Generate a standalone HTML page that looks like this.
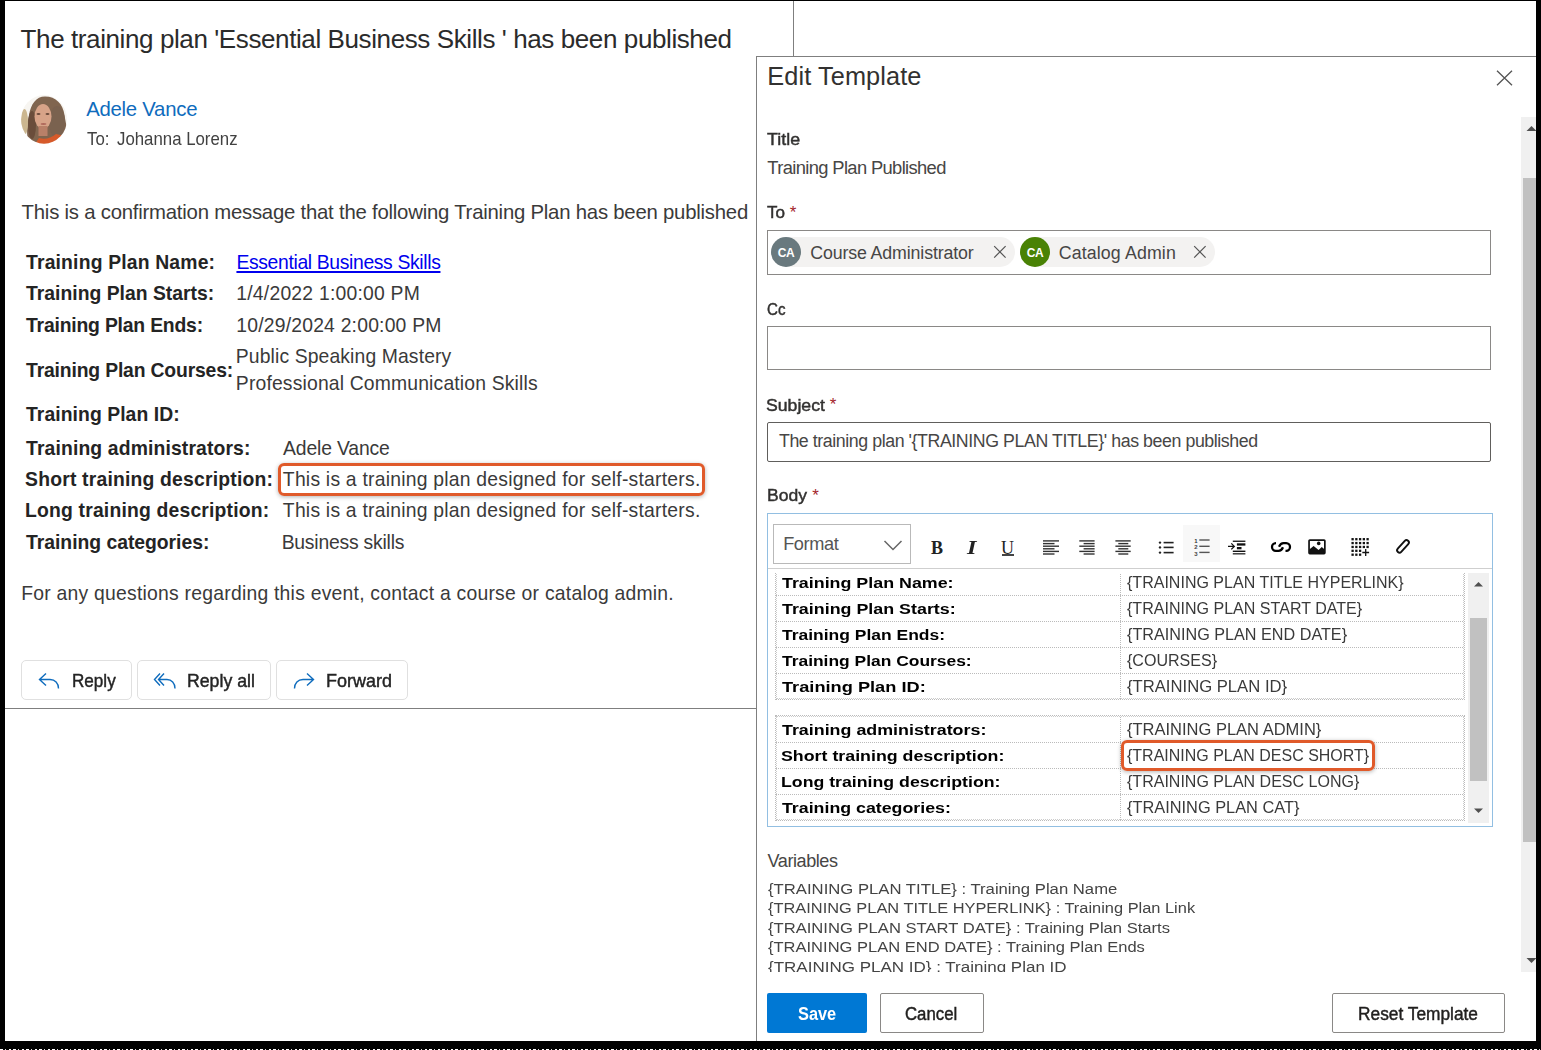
<!DOCTYPE html>
<html><head><meta charset="utf-8">
<style>
html,body{margin:0;padding:0;width:1541px;height:1050px;overflow:hidden;background:#000;}
*{box-sizing:border-box;}
body{font-family:"Liberation Sans",sans-serif;position:relative;}
.t{position:absolute;white-space:pre;line-height:1;}
.fr,.fv,.frs{font-weight:normal;}
.fb,.fvb,.fsb{font-weight:bold;}
.fs{font-weight:normal;-webkit-text-stroke:0.45px currentColor;}
.ast{position:absolute;color:#a4262c;font-size:17px;line-height:1;}
.ca{position:absolute;width:30px;text-align:center;color:#fff;font-size:12px;font-weight:bold;line-height:16px;letter-spacing:-0.4px;}
.tb{position:absolute;font-family:"Liberation Serif",serif;font-size:18px;line-height:1;color:#222;}
#varclip{position:absolute;left:760px;top:875px;width:700px;height:97px;overflow:hidden;}
</style></head>
<body>

<div class="deco" style="position:absolute;left:5px;top:1px;width:1531px;height:1040px;background:#fff;"></div>
<div class="deco" style="position:absolute;left:793px;top:1px;width:1px;height:56px;background:#7f7f7f;"></div>
<!-- avatar -->
<svg class="deco" style="position:absolute;left:21px;top:95px;filter:blur(0.45px);" width="48" height="49" viewBox="0 0 48 49">
<defs><clipPath id="avc"><ellipse cx="23" cy="24.4" rx="23" ry="24.3"/></clipPath><filter id="avb"><feGaussianBlur stdDeviation="0.7"/></filter></defs>
<g clip-path="url(#avc)"><rect x="0" y="0" width="48" height="49" fill="#f7f5f1"/>
<g filter="url(#avb)">
<path d="M24 1.5 C35 1.5 42 9 43.5 20 C45 30 48 38 45 44 L38 49 L8 49 C5 40 6 30 8 20 C10 9 15 1.5 24 1.5 Z" fill="#806550"/>
<ellipse cx="36" cy="27" rx="8" ry="16" fill="#7a6250"/>
<ellipse cx="11" cy="30" rx="4" ry="14" fill="#6a4e3a"/>
<ellipse cx="3.5" cy="27" rx="3.5" ry="13" fill="#cbb68f"/>
<ellipse cx="22" cy="21.5" rx="8.5" ry="12.5" fill="#d7a388"/>
<rect x="17.5" y="31" width="9" height="10" fill="#b98068"/>
<path d="M14 49 L18 43 C24 45 30 43 35 39 L44 41 L46 49 Z" fill="#d65a2a"/>
<ellipse cx="17.5" cy="19" rx="2" ry="1" fill="#6a4a3a"/>
<ellipse cx="26.5" cy="19" rx="2" ry="1" fill="#6a4a3a"/>
<ellipse cx="22.5" cy="29" rx="3" ry="1.1" fill="#b06a5c"/>
</g></g></svg>
<!-- email highlight -->
<div class="deco" style="position:absolute;left:278px;top:463px;width:427px;height:32.5px;border:3px solid #e05a2a;border-radius:6px;box-shadow:0 1px 4px rgba(0,0,0,.3);"></div>
<!-- buttons -->
<div class="deco" style="position:absolute;left:21px;top:660px;width:111px;height:40px;border:1px solid #e0e0e0;border-radius:5px;"></div>
<div class="deco" style="position:absolute;left:137px;top:660px;width:134px;height:40px;border:1px solid #e0e0e0;border-radius:5px;"></div>
<div class="deco" style="position:absolute;left:276px;top:660px;width:132px;height:40px;border:1px solid #e0e0e0;border-radius:5px;"></div>
<svg class="deco" style="position:absolute;left:36px;top:670px;" width="26" height="22" viewBox="0 0 26 22"><path d="M10 3.5 L3.5 9.5 L10 15.5 M3.5 9.5 H14 C19 9.5 22.5 13 22.5 18.5" fill="none" stroke="#0f6cbd" stroke-width="1.4"/></svg>
<svg class="deco" style="position:absolute;left:152px;top:670px;" width="26" height="22" viewBox="0 0 26 22"><path d="M8 3.5 L2.5 9.5 L8 15.5 M12 3.5 L6.5 9.5 L12 15.5 M6.5 9.5 H15 C19.5 9.5 23 13 23 18.5" fill="none" stroke="#0f6cbd" stroke-width="1.4"/></svg>
<svg class="deco" style="position:absolute;left:291px;top:670px;" width="26" height="22" viewBox="0 0 26 22"><path d="M16 3.5 L22.5 9.5 L16 15.5 M22.5 9.5 H12 C7 9.5 3.5 13 3.5 18.5" fill="none" stroke="#0f6cbd" stroke-width="1.4"/></svg>
<div class="deco" style="position:absolute;left:5px;top:708px;width:751px;height:1px;background:#7f7f7f;"></div>

<!-- dialog -->
<div class="deco" style="position:absolute;left:756px;top:56px;width:780px;height:985px;background:#fff;border-left:1px solid #7f7f7f;border-top:1px solid #7f7f7f;"></div>
<svg class="deco" style="position:absolute;left:1494px;top:68px;" width="21" height="21" viewBox="0 0 21 21"><path d="M3 2.8 L18 17.3 M18 2.8 L3 17.3" stroke="#555" stroke-width="1.3" fill="none"/></svg>
<!-- dialog scrollbar -->
<div class="deco" style="position:absolute;left:1521px;top:117px;width:15px;height:855px;background:#f0f0f0;"></div>
<div class="deco" style="position:absolute;left:1523px;top:178px;width:13px;height:664px;background:#c1c1c1;"></div>
<svg class="deco" style="position:absolute;left:1524px;top:124px;" width="14" height="8" viewBox="0 0 14 8"><path d="M2.5 7 L7.5 2 L12.5 7 Z" fill="#505050"/></svg>
<svg class="deco" style="position:absolute;left:1524px;top:957px;" width="14" height="8" viewBox="0 0 14 8"><path d="M2.5 1 L7.5 6 L12.5 1 Z" fill="#505050"/></svg>

<!-- asterisks -->
<div class="deco ast" style="left:789.8px;top:204px;">*</div>
<div class="deco ast" style="left:829.8px;top:396px;">*</div>
<div class="deco ast" style="left:812.3px;top:486.5px;">*</div>

<!-- To input -->
<div class="deco" style="position:absolute;left:767px;top:230px;width:724px;height:45px;border:1px solid #8a8886;"></div>
<div class="deco" style="position:absolute;left:771px;top:237px;width:244px;height:30px;border-radius:15px;background:#f3f2f1;"></div>
<div class="deco" style="position:absolute;left:771px;top:237px;width:30px;height:30px;border-radius:50%;background:#69797e;"></div>
<div class="deco" style="position:absolute;left:1020px;top:237px;width:195px;height:30px;border-radius:15px;background:#f3f2f1;"></div>
<div class="deco" style="position:absolute;left:1020px;top:237px;width:30px;height:30px;border-radius:50%;background:#498205;"></div>
<div class="deco ca" style="left:771px;top:245px;">CA</div>
<div class="deco ca" style="left:1020px;top:245px;">CA</div>
<svg class="deco" style="position:absolute;left:992px;top:244px;" width="16" height="16" viewBox="0 0 16 16"><path d="M2.2 2.2 L13.6 13.6 M13.6 2.2 L2.2 13.6" stroke="#555" stroke-width="1.2" fill="none"/></svg>
<svg class="deco" style="position:absolute;left:1191.5px;top:244px;" width="16" height="16" viewBox="0 0 16 16"><path d="M2.2 2.2 L13.6 13.6 M13.6 2.2 L2.2 13.6" stroke="#555" stroke-width="1.2" fill="none"/></svg>
<!-- Cc input -->
<div class="deco" style="position:absolute;left:767px;top:326px;width:724px;height:44px;border:1px solid #8a8886;"></div>
<!-- Subject input -->
<div class="deco" style="position:absolute;left:767px;top:422px;width:724px;height:40px;border:1px solid #605e5c;border-radius:2px;"></div>

<!-- editor -->
<div class="deco" style="position:absolute;left:767px;top:513px;width:726px;height:314px;border:1px solid #92bfe2;"></div>
<div class="deco" style="position:absolute;left:768px;top:568px;width:724px;height:1px;background:#cfcfcf;"></div>
<div class="deco" style="position:absolute;left:1183px;top:525px;width:37px;height:37px;background:#f8f8f8;"></div>
<div class="deco" style="position:absolute;left:773px;top:524px;width:138px;height:40px;border:1px solid #b9b9b9;"></div>
<svg class="deco" style="position:absolute;left:882px;top:538px;" width="22" height="14" viewBox="0 0 22 14"><path d="M2.5 3 L11 11.5 L19.5 3" fill="none" stroke="#666" stroke-width="1.5"/></svg>
<div class="deco tb" style="left:931px;top:539px;font-weight:bold;">B</div>
<div class="deco tb" style="left:967px;top:539px;font-weight:bold;font-style:italic;transform:scaleX(1.35);transform-origin:0 0;">I</div>
<div class="deco tb" style="left:1001px;top:539px;">U</div>
<div class="deco" style="position:absolute;left:1001.8px;top:554px;width:12.5px;height:1.8px;background:#444;"></div>
<svg class="deco" style="position:absolute;left:1030px;top:530px;" width="400" height="35" viewBox="0 0 400 35"><rect x="13.00" y="10.20" width="16.00" height="1.40" fill="#333"/><rect x="13.00" y="12.90" width="11.50" height="1.40" fill="#333"/><rect x="13.00" y="15.50" width="16.00" height="1.40" fill="#333"/><rect x="13.00" y="18.10" width="11.50" height="1.40" fill="#333"/><rect x="13.00" y="20.70" width="16.00" height="1.40" fill="#333"/><rect x="13.00" y="23.30" width="11.50" height="1.40" fill="#333"/><rect x="49.30" y="10.20" width="15.30" height="1.40" fill="#333"/><rect x="53.60" y="12.90" width="11.00" height="1.40" fill="#333"/><rect x="49.30" y="15.50" width="15.30" height="1.40" fill="#333"/><rect x="53.60" y="18.10" width="11.00" height="1.40" fill="#333"/><rect x="49.30" y="20.70" width="15.30" height="1.40" fill="#333"/><rect x="53.60" y="23.30" width="11.00" height="1.40" fill="#333"/><rect x="85.40" y="10.20" width="15.30" height="1.40" fill="#333"/><rect x="88.30" y="12.90" width="10.00" height="1.40" fill="#333"/><rect x="85.40" y="15.50" width="15.30" height="1.40" fill="#333"/><rect x="88.30" y="18.10" width="10.00" height="1.40" fill="#333"/><rect x="85.40" y="20.70" width="15.30" height="1.40" fill="#333"/><rect x="88.30" y="23.30" width="10.00" height="1.40" fill="#333"/><circle cx="130" cy="12.6" r="1.2" fill="#222"/><rect x="133.60" y="11.80" width="10.00" height="1.60" fill="#222"/><circle cx="130" cy="17.4" r="1.2" fill="#222"/><rect x="133.60" y="16.60" width="10.00" height="1.60" fill="#222"/><circle cx="130" cy="22.6" r="1.2" fill="#222"/><rect x="133.60" y="21.80" width="10.00" height="1.60" fill="#222"/><rect x="169.30" y="9.30" width="10.30" height="1.40" fill="#555"/><rect x="169.30" y="15.60" width="10.30" height="1.40" fill="#555"/><rect x="169.30" y="21.70" width="10.30" height="1.40" fill="#555"/><text x="164.2" y="12.5" font-family="Liberation Sans" font-weight="bold" font-size="6" fill="#333">1</text><text x="164.2" y="19" font-family="Liberation Sans" font-weight="bold" font-size="6" fill="#444">2</text><text x="164.2" y="25.8" font-family="Liberation Sans" font-weight="bold" font-size="6" fill="#444">3</text><path d="M198 16.4 H204 M201.3 13.4 L204.3 16.4 L201.3 19.4" fill="none" stroke="#111" stroke-width="1.3"/><rect x="202.80" y="10.60" width="12.60" height="1.30" fill="#111"/><rect x="206.90" y="13.30" width="8.50" height="2.30" fill="#111"/><rect x="206.90" y="17.00" width="4.60" height="2.30" fill="#111"/><rect x="202.80" y="20.60" width="12.60" height="1.40" fill="#111"/><rect x="202.80" y="23.10" width="12.60" height="1.40" fill="#333"/><path d="M246 13.2 H245.8 C243.6 13.2 242 15 242 17 C242 19 243.6 20.8 245.8 20.8 H248.5 C250.5 20.8 252 19.5 253 17.2" fill="none" stroke="#000" stroke-width="2.3"/><path d="M249 16.8 C250 14.5 251.5 13.2 253.5 13.2 H256.2 C258.4 13.2 260 15 260 17 C260 19 258.4 20.8 256.2 20.8 H255.5" fill="none" stroke="#000" stroke-width="2.3"/><rect x="279.05" y="10.05" width="15.8" height="13.5" rx="0.8" fill="none" stroke="#111" stroke-width="1.7"/><path d="M279.3 23.5 V19.5 L283.6 15.9 L288.6 20 L291.8 17 L294.7 19.5 V23.5 Z" fill="#111"/><circle cx="288.7" cy="13.4" r="1.8" fill="#111"/><rect x="321.45" y="8.05" width="2.30" height="2.30" fill="#111"/><rect x="325.20" y="8.05" width="2.30" height="2.30" fill="#111"/><rect x="328.95" y="8.05" width="2.30" height="2.30" fill="#111"/><rect x="332.70" y="8.05" width="2.30" height="2.30" fill="#111"/><rect x="336.45" y="8.05" width="2.30" height="2.30" fill="#111"/><rect x="321.45" y="11.92" width="2.30" height="2.30" fill="#111"/><rect x="325.20" y="11.92" width="2.30" height="2.30" fill="#111"/><rect x="328.95" y="11.92" width="2.30" height="2.30" fill="#111"/><rect x="332.70" y="11.92" width="2.30" height="2.30" fill="#111"/><rect x="336.45" y="11.92" width="2.30" height="2.30" fill="#111"/><rect x="321.45" y="15.80" width="2.30" height="2.30" fill="#111"/><rect x="325.20" y="15.80" width="2.30" height="2.30" fill="#111"/><rect x="328.95" y="15.80" width="2.30" height="2.30" fill="#111"/><rect x="332.70" y="15.80" width="2.30" height="2.30" fill="#111"/><rect x="336.45" y="15.80" width="2.30" height="2.30" fill="#111"/><rect x="321.45" y="19.67" width="2.30" height="2.30" fill="#111"/><rect x="325.20" y="19.67" width="2.30" height="2.30" fill="#111"/><rect x="328.95" y="19.67" width="2.30" height="2.30" fill="#111"/><rect x="321.45" y="23.55" width="2.30" height="2.30" fill="#111"/><rect x="325.20" y="23.55" width="2.30" height="2.30" fill="#111"/><rect x="328.95" y="23.55" width="2.30" height="2.30" fill="#111"/><path d="M335.7 19.1 V25.9 M332.3 22.5 H339.1" stroke="#111" stroke-width="1.3"/><g transform="translate(373,16.4) rotate(-48)"><rect x="-7.6" y="-2.35" width="15.2" height="4.7" rx="2.35" fill="none" stroke="#111" stroke-width="1.9"/></g></svg>
<!-- editor tables -->
<div class="deco" style="position:absolute;left:768px;top:569px;width:700px;height:256px;overflow:hidden;">
  <div style="position:absolute;left:7px;top:4px;width:690px;height:127px;border:1px dotted #bbb;border-top:none;"></div><div style="position:absolute;left:8px;top:5px;width:688px;height:125px;border:1px dotted #ccc;border-top:none;"></div>
  <div style="position:absolute;left:352px;top:5px;width:1px;height:125px;border-left:1px dotted #bbb;"></div>
  <div style="position:absolute;left:8px;top:26px;width:689px;height:0;border-top:1px dotted #bbb;"></div><div style="position:absolute;left:8px;top:52px;width:689px;height:0;border-top:1px dotted #bbb;"></div><div style="position:absolute;left:8px;top:78px;width:689px;height:0;border-top:1px dotted #bbb;"></div><div style="position:absolute;left:8px;top:104px;width:689px;height:0;border-top:1px dotted #bbb;"></div>
  <div style="position:absolute;left:7px;top:146px;width:690px;height:106px;border:1px dotted #bbb;"></div><div style="position:absolute;left:8px;top:147px;width:688px;height:104px;border:1px dotted #ccc;"></div>
  <div style="position:absolute;left:352px;top:148px;width:1px;height:103px;border-left:1px dotted #bbb;"></div>
  <div style="position:absolute;left:8px;top:173px;width:689px;height:0;border-top:1px dotted #bbb;"></div><div style="position:absolute;left:8px;top:199px;width:689px;height:0;border-top:1px dotted #bbb;"></div><div style="position:absolute;left:8px;top:225px;width:689px;height:0;border-top:1px dotted #bbb;"></div>
</div>
<!-- editor scrollbar -->
<div class="deco" style="position:absolute;left:1468px;top:573px;width:21px;height:250px;background:#f0f0f0;"></div>
<div class="deco" style="position:absolute;left:1470px;top:618px;width:17px;height:163px;background:#c1c1c1;"></div>
<svg class="deco" style="position:absolute;left:1472px;top:580px;" width="14" height="8" viewBox="0 0 14 8"><path d="M2 6.5 L6.5 2 L11 6.5 Z" fill="#505050"/></svg>
<svg class="deco" style="position:absolute;left:1472px;top:807px;" width="14" height="8" viewBox="0 0 14 8"><path d="M2 1.5 L6.5 6 L11 1.5 Z" fill="#505050"/></svg>
<div class="deco" style="position:absolute;left:1120.5px;top:739.7px;width:254px;height:31.3px;border:3px solid #e05a2a;border-radius:6px;box-shadow:0 1px 4px rgba(0,0,0,.3);"></div>

<div class="deco" style="position:absolute;left:760px;top:972px;width:755px;height:20px;background:#fff;z-index:5;"></div>
<div class="deco" style="position:absolute;left:0;top:1049px;width:1541px;height:1px;background:repeating-linear-gradient(90deg,#fff 0 3px,#000 3px 5px,#ddd 5px 6px,#000 6px 9px,#fff 9px 11px,#000 11px 13px);"></div>
<!-- footer -->
<div class="deco" style="position:absolute;left:767px;top:993px;width:100px;height:40px;background:#0078d4;border-radius:2px;"></div>
<div class="deco" style="position:absolute;left:880px;top:993px;width:104px;height:40px;border:1px solid #8a8886;border-radius:2px;"></div>
<div class="deco" style="position:absolute;left:1332px;top:993px;width:173px;height:40px;border:1px solid #8a8886;border-radius:2px;"></div>

<div class="t fr" id="e_title" style="left:20.58px;top:26.01px;font-size:26.03px;letter-spacing:-0.406px;color:#2b2b2b;">The training plan &#x27;Essential Business Skills &#x27; has been published</div><div class="t fr" id="e_adele" style="left:86.18px;top:98.72px;font-size:20.34px;letter-spacing:-0.250px;color:#0f6cbd;">Adele Vance</div><div class="t frs" id="e_to" style="left:87.09px;top:129.91px;font-size:18.78px;letter-spacing:0.000px;color:#424242;transform:scaleX(0.8967);transform-origin:0 0;">To:</div><div class="t frs" id="e_johanna" style="left:116.69px;top:129.91px;font-size:18.78px;letter-spacing:0.000px;color:#424242;transform:scaleX(0.8955);transform-origin:0 0;">Johanna Lorenz</div><div class="t fr" id="e_conf" style="left:21.58px;top:202.00px;font-size:20.34px;letter-spacing:-0.222px;color:#3a3a3a;">This is a confirmation message that the following Training Plan has been published</div><div class="t fb" id="el0" style="left:26.05px;top:252.71px;font-size:19.35px;letter-spacing:0.167px;color:#242424;">Training Plan Name:</div><div class="t fb" id="el1" style="left:26.05px;top:283.60px;font-size:19.35px;letter-spacing:-0.000px;color:#242424;">Training Plan Starts:</div><div class="t fb" id="el2" style="left:26.05px;top:315.81px;font-size:19.35px;letter-spacing:-0.194px;color:#242424;">Training Plan Ends:</div><div class="t fb" id="el3" style="left:26.05px;top:360.71px;font-size:19.35px;letter-spacing:-0.167px;color:#242424;">Training Plan Courses:</div><div class="t fb" id="el4" style="left:26.05px;top:405.40px;font-size:19.35px;letter-spacing:0.062px;color:#242424;">Training Plan ID:</div><div class="t fb" id="el5" style="left:26.05px;top:438.51px;font-size:19.35px;letter-spacing:0.130px;color:#242424;">Training administrators:</div><div class="t fb" id="el6" style="left:25.05px;top:470.31px;font-size:19.35px;letter-spacing:0.192px;color:#242424;">Short training description:</div><div class="t fb" id="el7" style="left:25.05px;top:501.21px;font-size:19.35px;letter-spacing:0.180px;color:#242424;">Long training description:</div><div class="t fb" id="el8" style="left:26.05px;top:533.01px;font-size:19.35px;letter-spacing:-0.026px;color:#242424;">Training categories:</div><div class="t fr" id="ev0" style="left:236.45px;top:252.71px;font-size:19.35px;letter-spacing:-0.354px;color:#0000ee;text-decoration:underline;text-decoration-thickness:1.5px;text-underline-offset:2px;">Essential Business Skills</div><div class="t fr" id="ev1" style="left:236.25px;top:283.60px;font-size:19.35px;letter-spacing:0.222px;color:#3a3a3a;">1/4/2022 1:00:00 PM</div><div class="t fr" id="ev2" style="left:236.25px;top:315.81px;font-size:19.35px;letter-spacing:0.200px;color:#3a3a3a;">10/29/2024 2:00:00 PM</div><div class="t fr" id="ev3" style="left:235.85px;top:347.01px;font-size:19.35px;letter-spacing:0.114px;color:#3a3a3a;">Public Speaking Mastery</div><div class="t fr" id="ev4" style="left:235.85px;top:373.51px;font-size:19.35px;letter-spacing:0.156px;color:#3a3a3a;">Professional Communication Skills</div><div class="t fr" id="ev5" style="left:283.05px;top:438.51px;font-size:19.35px;letter-spacing:-0.150px;color:#3a3a3a;">Adele Vance</div><div class="t fr" id="ev6" style="left:282.85px;top:470.31px;font-size:19.35px;letter-spacing:0.220px;color:#3a3a3a;">This is a training plan designed for self-starters.</div><div class="t fr" id="ev7" style="left:282.85px;top:501.21px;font-size:19.35px;letter-spacing:0.220px;color:#3a3a3a;">This is a training plan designed for self-starters.</div><div class="t fr" id="ev8" style="left:281.65px;top:533.01px;font-size:19.35px;letter-spacing:-0.214px;color:#3a3a3a;">Business skills</div><div class="t fr" id="e_for" style="left:21.25px;top:583.90px;font-size:19.35px;letter-spacing:0.233px;color:#3a3a3a;">For any questions regarding this event, contact a course or catalog admin.</div><div class="t fs" id="e_reply" style="left:71.69px;top:671.91px;font-size:18.78px;letter-spacing:0.000px;color:#242424;transform:scaleX(0.9108);transform-origin:0 0;">Reply</div><div class="t fs" id="e_replyall" style="left:186.69px;top:671.91px;font-size:18.78px;letter-spacing:0.000px;color:#242424;transform:scaleX(0.9429);transform-origin:0 0;">Reply all</div><div class="t fs" id="e_forward" style="left:325.69px;top:671.91px;font-size:18.78px;letter-spacing:0.000px;color:#242424;transform:scaleX(0.9583);transform-origin:0 0;">Forward</div><div class="t fr" id="d_title" style="left:767.30px;top:63.81px;font-size:25.32px;letter-spacing:0.100px;color:#323130;">Edit Template</div><div class="t fs" id="d_tl" style="left:767.43px;top:131.71px;font-size:16.64px;letter-spacing:0.000px;color:#323130;transform:scaleX(1.0745);transform-origin:0 0;">Title</div><div class="t fr" id="d_tv" style="left:767.32px;top:159.10px;font-size:18.35px;letter-spacing:-0.636px;color:#474645;">Training Plan Published</div><div class="t fs" id="d_to" style="left:767.43px;top:205.31px;font-size:16.64px;letter-spacing:0.000px;color:#323130;transform:scaleX(1.0255);transform-origin:0 0;">To</div><div class="t fr" id="d_chip1" style="left:810.26px;top:245.01px;font-size:17.78px;letter-spacing:-0.126px;color:#474645;">Course Administrator</div><div class="t fr" id="d_chip2" style="left:1058.76px;top:245.01px;font-size:17.78px;letter-spacing:0.125px;color:#474645;">Catalog Admin</div><div class="t fs" id="d_cc" style="left:767.41px;top:300.90px;font-size:17.07px;letter-spacing:0.000px;color:#323130;transform:scaleX(0.8861);transform-origin:0 0;">Cc</div><div class="t fs" id="d_subj" style="left:766.41px;top:396.80px;font-size:17.07px;letter-spacing:0.000px;color:#323130;transform:scaleX(1.0354);transform-origin:0 0;">Subject</div><div class="t fr" id="d_subjv" style="left:778.96px;top:433.31px;font-size:17.78px;letter-spacing:-0.424px;color:#474645;">The training plan &#x27;{TRAINING PLAN TITLE}&#x27; has been published</div><div class="t fs" id="d_body" style="left:766.59px;top:487.31px;font-size:17.35px;letter-spacing:0.000px;color:#323130;transform:scaleX(1.0106);transform-origin:0 0;">Body</div><div class="t fr" id="d_format" style="left:783.13px;top:535.01px;font-size:18.21px;letter-spacing:-0.400px;color:#555;">Format</div><div class="t fvb" id="tl0" style="left:781.94px;top:574.90px;font-size:15.08px;letter-spacing:0.000px;color:#000;transform:scaleX(1.1835);transform-origin:0 0;">Training Plan Name:</div><div class="t fvb" id="tl1" style="left:781.94px;top:600.90px;font-size:15.08px;letter-spacing:0.000px;color:#000;transform:scaleX(1.1844);transform-origin:0 0;">Training Plan Starts:</div><div class="t fvb" id="tl2" style="left:781.94px;top:626.90px;font-size:15.08px;letter-spacing:0.000px;color:#000;transform:scaleX(1.1586);transform-origin:0 0;">Training Plan Ends:</div><div class="t fvb" id="tl3" style="left:781.94px;top:652.90px;font-size:15.08px;letter-spacing:0.000px;color:#000;transform:scaleX(1.1549);transform-origin:0 0;">Training Plan Courses:</div><div class="t fvb" id="tl4" style="left:781.94px;top:678.90px;font-size:15.08px;letter-spacing:0.000px;color:#000;transform:scaleX(1.2080);transform-origin:0 0;">Training Plan ID:</div><div class="t fvb" id="tl5" style="left:781.94px;top:722.00px;font-size:15.08px;letter-spacing:0.000px;color:#000;transform:scaleX(1.1839);transform-origin:0 0;">Training administrators:</div><div class="t fvb" id="tl6" style="left:780.94px;top:748.00px;font-size:15.08px;letter-spacing:0.000px;color:#000;transform:scaleX(1.1800);transform-origin:0 0;">Short training description:</div><div class="t fvb" id="tl7" style="left:780.94px;top:774.00px;font-size:15.08px;letter-spacing:0.000px;color:#000;transform:scaleX(1.1750);transform-origin:0 0;">Long training description:</div><div class="t fvb" id="tl8" style="left:781.94px;top:800.00px;font-size:15.08px;letter-spacing:0.000px;color:#000;transform:scaleX(1.1783);transform-origin:0 0;">Training categories:</div><div class="t fv" id="tv0" style="left:1126.73px;top:574.91px;font-size:15.65px;letter-spacing:0.000px;color:#3a3a3a;transform:scaleX(1.0245);transform-origin:0 0;">{TRAINING PLAN TITLE HYPERLINK}</div><div class="t fv" id="tv1" style="left:1126.73px;top:600.91px;font-size:15.65px;letter-spacing:0.000px;color:#3a3a3a;transform:scaleX(1.0260);transform-origin:0 0;">{TRAINING PLAN START DATE}</div><div class="t fv" id="tv2" style="left:1126.73px;top:626.91px;font-size:15.65px;letter-spacing:0.000px;color:#3a3a3a;transform:scaleX(1.0349);transform-origin:0 0;">{TRAINING PLAN END DATE}</div><div class="t fv" id="tv3" style="left:1126.73px;top:652.91px;font-size:15.65px;letter-spacing:0.000px;color:#3a3a3a;transform:scaleX(1.0257);transform-origin:0 0;">{COURSES}</div><div class="t fv" id="tv4" style="left:1126.73px;top:678.91px;font-size:15.65px;letter-spacing:0.000px;color:#3a3a3a;transform:scaleX(1.0647);transform-origin:0 0;">{TRAINING PLAN ID}</div><div class="t fv" id="tv5" style="left:1126.73px;top:722.01px;font-size:15.65px;letter-spacing:0.000px;color:#3a3a3a;transform:scaleX(1.0547);transform-origin:0 0;">{TRAINING PLAN ADMIN}</div><div class="t fv" id="tv6" style="left:1126.73px;top:748.01px;font-size:15.65px;letter-spacing:0.000px;color:#3a3a3a;transform:scaleX(1.0218);transform-origin:0 0;">{TRAINING PLAN DESC SHORT}</div><div class="t fv" id="tv7" style="left:1126.73px;top:774.01px;font-size:15.65px;letter-spacing:0.000px;color:#3a3a3a;transform:scaleX(1.0239);transform-origin:0 0;">{TRAINING PLAN DESC LONG}</div><div class="t fv" id="tv8" style="left:1126.73px;top:800.01px;font-size:15.65px;letter-spacing:0.000px;color:#3a3a3a;transform:scaleX(1.0456);transform-origin:0 0;">{TRAINING PLAN CAT}</div><div class="t fr" id="d_var" style="left:767.54px;top:851.80px;font-size:18.07px;letter-spacing:-0.437px;color:#474645;">Variables</div><div class="t fv" id="vl0" style="left:767.92px;top:881.11px;font-size:15.36px;letter-spacing:0.000px;color:#444;transform:scaleX(1.0864);transform-origin:0 0;">{TRAINING PLAN TITLE} : Training Plan Name</div><div class="t fv" id="vl1" style="left:767.92px;top:900.45px;font-size:15.36px;letter-spacing:0.000px;color:#444;transform:scaleX(1.0675);transform-origin:0 0;">{TRAINING PLAN TITLE HYPERLINK} : Training Plan Link</div><div class="t fv" id="vl2" style="left:767.92px;top:919.80px;font-size:15.36px;letter-spacing:0.000px;color:#444;transform:scaleX(1.0811);transform-origin:0 0;">{TRAINING PLAN START DATE} : Training Plan Starts</div><div class="t fv" id="vl3" style="left:767.92px;top:939.15px;font-size:15.36px;letter-spacing:0.000px;color:#444;transform:scaleX(1.0750);transform-origin:0 0;">{TRAINING PLAN END DATE} : Training Plan Ends</div><div class="t fv" id="vl4" style="left:767.92px;top:958.51px;font-size:15.36px;letter-spacing:0.000px;color:#444;transform:scaleX(1.1070);transform-origin:0 0;">{TRAINING PLAN ID} : Training Plan ID</div><div class="t fsb" id="d_save" style="left:797.96px;top:1005.61px;font-size:17.78px;letter-spacing:0.000px;color:#fff;transform:scaleX(0.9213);transform-origin:0 0;">Save</div><div class="t fs" id="d_cancel" style="left:904.76px;top:1005.61px;font-size:17.78px;letter-spacing:0.000px;color:#201f1e;transform:scaleX(0.9444);transform-origin:0 0;">Cancel</div><div class="t fs" id="d_reset" style="left:1357.71px;top:1005.00px;font-size:18.49px;letter-spacing:0.000px;color:#201f1e;transform:scaleX(0.9366);transform-origin:0 0;">Reset Template</div>
</body></html>
